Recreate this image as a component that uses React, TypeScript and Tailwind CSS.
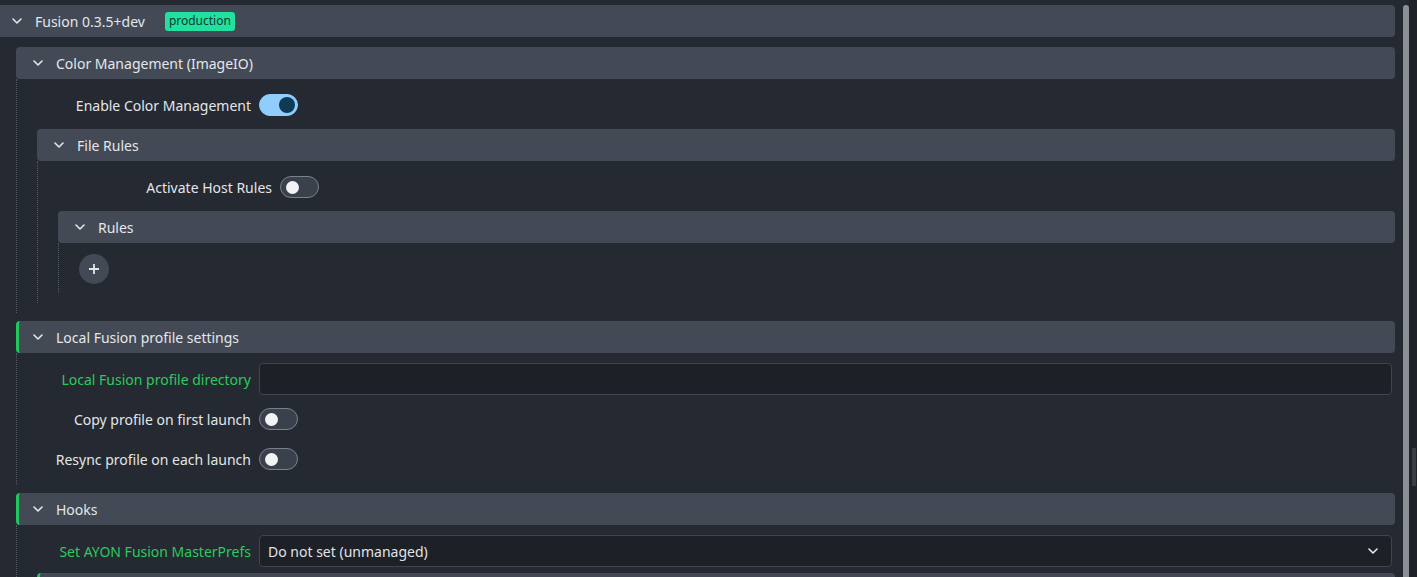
import type { ReactNode } from "react";
import clsx from "clsx";

function Chevron({ className }: { className?: string }) {
  return (
    <svg width="10" height="6" viewBox="0 0 10 6" className={className} fill="none">
      <polyline points="1,1 5,5 9,1" stroke="currentColor" strokeWidth="1.6" strokeLinecap="round" strokeLinejoin="round" />
    </svg>
  );
}

function Toggle({ on = false }: { on?: boolean }) {
  return (
    <div
      className={clsx(
        "flex h-[22px] w-[39px] shrink-0 items-center rounded-full border",
        on ? "justify-end border-[#90cdfd] bg-[#90cdfd] pr-[2px]" : "border-[#7b818b] bg-[#3b414c] pl-[5px]"
      )}
    >
      <div className={clsx("rounded-full", on ? "h-4 w-4 bg-[#0c3a57]" : "h-[13px] w-[13px] bg-[#f2f3f5]")} />
    </div>
  );
}

function Row({ label, green, children }: { label: string; green?: boolean; children: ReactNode }) {
  return (
    <div className="flex h-8 shrink-0 items-center gap-2">
      <div
        className={clsx(
          "w-[214px] shrink-0 whitespace-nowrap text-right text-[14px]",
          green ? "text-[#2cc95f]" : "text-[#e2e5e9]"
        )}
      >
        {label}
      </div>
      <div className="flex min-w-0 flex-1 items-center pr-[3px]">{children}</div>
    </div>
  );
}

function Section({
  title,
  accent,
  children,
  pb = "pb-[10px]",
}: {
  title?: string;
  accent?: boolean;
  children?: ReactNode;
  pb?: string;
}) {
  return (
    <div className="flex shrink-0 flex-col">
      <div
        className={clsx(
          "flex h-8 shrink-0 items-center rounded bg-[#434a56] text-[14px] text-[#e4e6ea]",
          accent ? "border-l-[3px] border-[#22c55e] pl-[14px]" : "pl-[17px]"
        )}
      >
        <Chevron className="text-[#e4e6ea]" />
        {title && <span className="ml-[13px]">{title}</span>}
      </div>
      {children && (
        <div className={clsx("flex flex-col gap-2 border-l border-dotted border-[#545b67] pl-5 pt-[10px]", pb)}>
          {children}
        </div>
      )}
    </div>
  );
}

export default function App() {
  return (
    <div className="flex h-[577px] w-[1417px] overflow-hidden bg-[#252931] font-['Noto_Sans',sans-serif]">
      <div className="flex w-[1395px] shrink-0 flex-col self-start pt-[5px]">
        <div className="flex h-8 shrink-0 items-center rounded-r bg-[#434a56] pl-3 text-[14px] text-[#e4e6ea]">
          <Chevron />
          <span className="ml-[13px]">Fusion 0.3.5+dev</span>
          <span className="ml-5 flex h-[19px] items-center rounded-[3px] bg-[#22e0a0] px-[4px] text-[12px] text-[#0b3b2b]">
            production
          </span>
        </div>

        <div className="flex flex-col gap-2 pl-4 pt-[10px]">
          <Section title="Color Management (ImageIO)">
            <Row label="Enable Color Management">
              <Toggle on />
            </Row>
            <Section title="File Rules">
              <Row label="Activate Host Rules">
                <Toggle />
              </Row>
              <Section title="Rules" pb="pb-2">
                <div className="flex h-8 shrink-0 items-center">
                  <button className="flex h-[30px] w-[30px] items-center justify-center rounded-full bg-[#434a56] text-[#e4e6ea]">
                    <svg width="12" height="12" viewBox="0 0 12 12">
                      <path d="M6 1v10M1 6h10" stroke="currentColor" strokeWidth="1.8" />
                    </svg>
                  </button>
                </div>
              </Section>
            </Section>
          </Section>

          <Section title="Local Fusion profile settings" accent>
            <Row label="Local Fusion profile directory" green>
              <div className="h-8 w-full rounded border border-[#3e444e] bg-[#1d2026]" />
            </Row>
            <Row label="Copy profile on first launch">
              <Toggle />
            </Row>
            <Row label="Resync profile on each launch">
              <Toggle />
            </Row>
          </Section>

          <Section title="Hooks" accent>
            <Row label="Set AYON Fusion MasterPrefs" green>
              <div className="flex h-8 w-full items-center justify-between rounded border border-[#3e444e] bg-[#1d2026] pl-2 pr-[13px] text-[14px] text-[#e0e3e8]">
                <span>Do not set (unmanaged)</span>
                <Chevron className="text-[#e8eaee]" />
              </div>
            </Row>
            <div className="-mt-[2px]">
              <Section accent />
            </div>
          </Section>
        </div>
      </div>

      <div className="ml-2 flex w-[6px] flex-col pt-[5px]">
        <div className="flex-1 rounded-t-full bg-[#8b9098]" />
      </div>
      <div className="flex flex-1 flex-col bg-[#1e2228] pl-[3px] pr-[1px] pt-[448px]">
        <div className="h-[38px] bg-[#3a3d41]" />
      </div>
    </div>
  );
}
